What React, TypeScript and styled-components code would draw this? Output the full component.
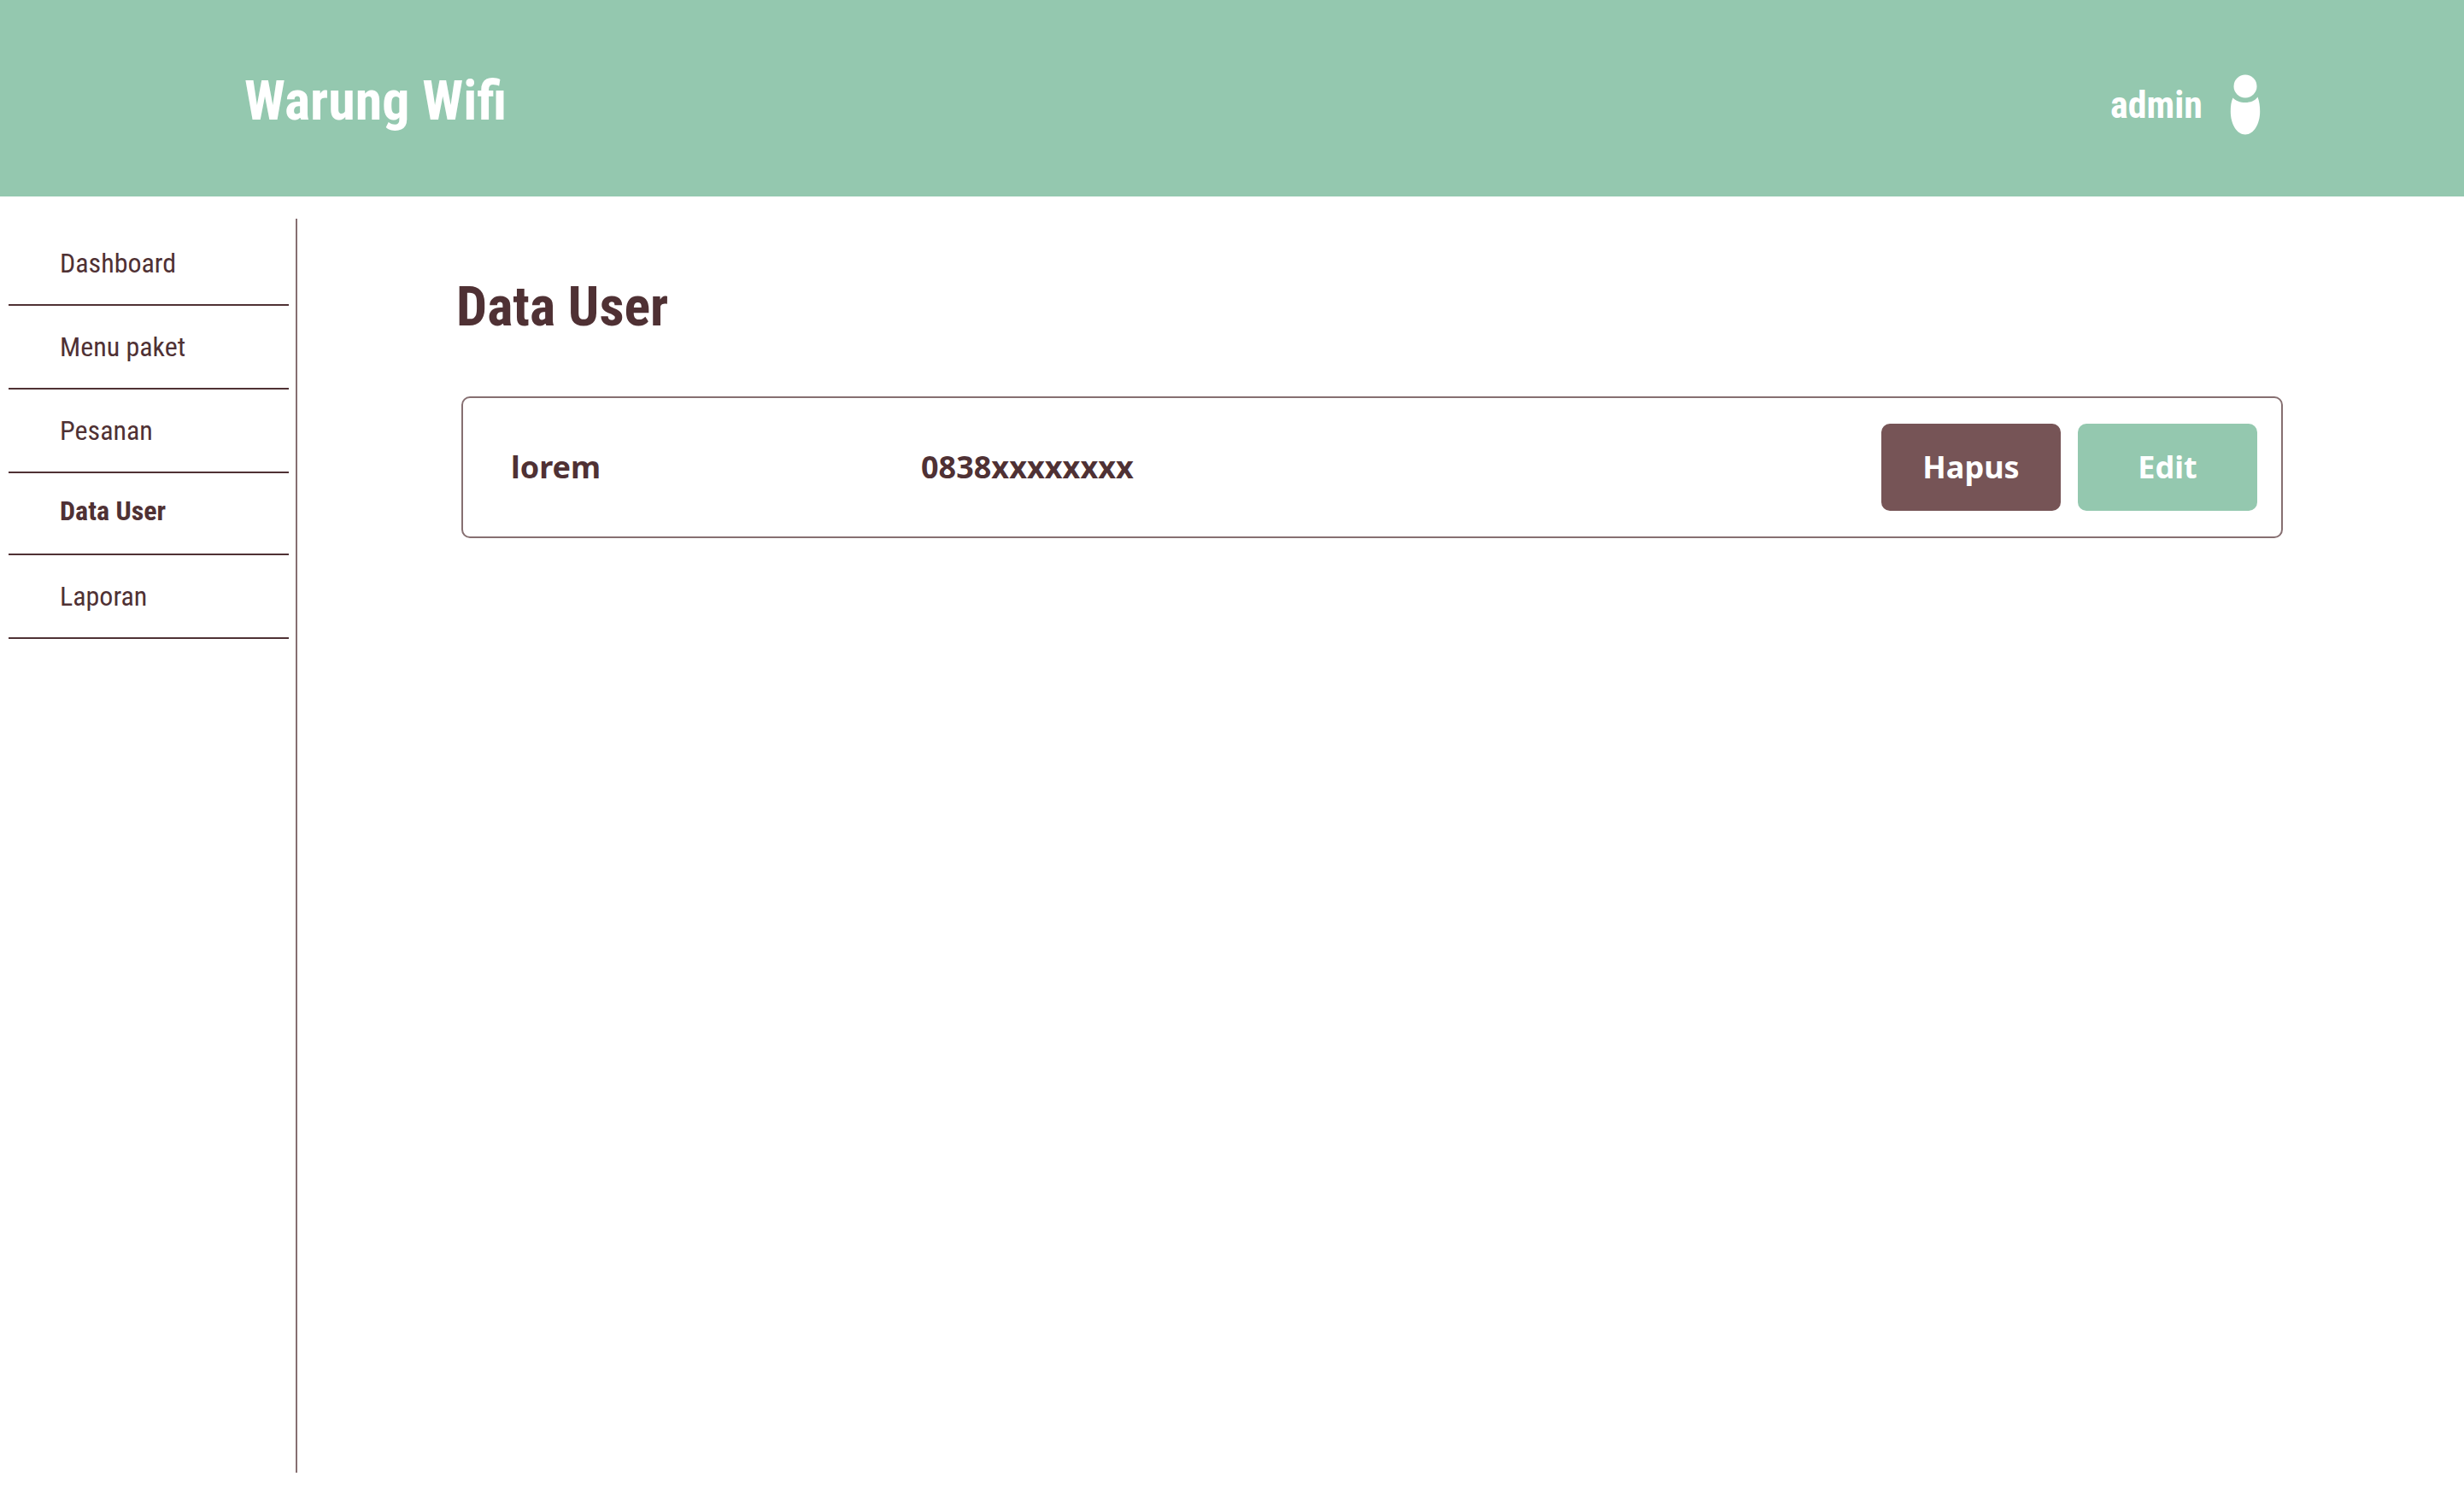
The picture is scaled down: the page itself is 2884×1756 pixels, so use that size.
import React from "react";
import styled, { createGlobalStyle } from "styled-components";

const color = {
  mint: "#94c8af",
  ink: "#4f3134",
  rose: "#765456",
  line: "#866f71",
  paper: "#ffffff",
};

const display = `"Roboto Condensed", "Liberation Sans Narrow", "Liberation Sans", sans-serif`;
const body = `"Noto Sans", "Open Sans", sans-serif`;

const GlobalStyle = createGlobalStyle`
  *, *::before, *::after { box-sizing: border-box; }
  body { margin: 0; background: ${color.paper}; color: ${color.ink}; font-family: ${body}; }
`;

const Page = styled.div`
  display: flex;
  flex-direction: column;
  min-height: 100vh;
`;

const Header = styled.header`
  display: flex;
  align-items: center;
  justify-content: space-between;
  height: 230px;
  padding: 8px 238px 0 286px;
  background: ${color.mint};
  color: #fff;
  font-family: ${display};
  font-weight: 700;
`;

const Brand = styled.a`
  color: inherit;
  font-size: 64px;
  line-height: 80px;
  text-decoration: none;
`;

const Account = styled.button`
  display: flex;
  align-items: center;
  gap: 32px;
  padding: 8px 0 0;
  border: 0;
  background: none;
  color: inherit;
  font: inherit;
  font-size: 44px;
  line-height: 80px;
  cursor: pointer;
`;

const Columns = styled.div`
  display: flex;
  flex: 1;
  padding: 26px 0 32px;
`;

const Sidebar = styled.aside`
  flex: none;
  width: 348px;
  padding: 4px 8px 0 10px;
  border-right: 2px solid ${color.line};
`;

const NavList = styled.ul`
  margin: 0;
  padding: 0;
  list-style: none;
`;

const NavLink = styled.a<{ $active?: boolean }>`
  display: block;
  padding: ${(p) => (p.$active ? "20px 60px 26px" : "24px 60px")};
  border-bottom: 2px solid ${color.ink};
  color: ${color.ink};
  font-family: ${display};
  font-size: 32px;
  font-weight: ${(p) => (p.$active ? 700 : 400)};
  line-height: 48px;
  text-decoration: none;
  white-space: nowrap;
`;

const Main = styled.main`
  flex: 1;
  min-width: 0;
  padding: 64px 212px 0 192px;
`;

const Title = styled.h1`
  margin: 0 0 64px -6px;
  font-family: ${display};
  font-size: 64px;
  font-weight: 700;
  line-height: 80px;
`;

const UserList = styled.ul`
  display: grid;
  gap: 32px;
  margin: 0;
  padding: 0;
  list-style: none;
`;

const UserRow = styled.li`
  display: grid;
  grid-template-columns: 480px 1fr auto;
  align-items: center;
  padding: 30px 28px 30px 56px;
  border: 2px solid ${color.line};
  border-radius: 10px;
  font-size: 36px;
  font-weight: 700;
  line-height: 50px;
`;

const Actions = styled.div`
  display: flex;
  gap: 20px;
`;

const ActionButton = styled.button<{ $tone: string }>`
  width: 210px;
  padding: 26px 0;
  border: 0;
  border-radius: 10px;
  background: ${(p) => p.$tone};
  color: #fff;
  font: inherit;
  cursor: pointer;
`;

const PersonIcon = () => (
  <svg width="36" height="72" viewBox="0 0 36 72" fill="#fff" aria-hidden="true">
    <circle cx="18" cy="14" r="13.5" />
    <path d="M3.5 27.5 C6.500 31 12 33 18 33 C24 33 29.500 31 32.500 26.500 C34.500 32 35.200 37 35.200 43.500 C35.200 58 28 70.500 18 70.500 C8 70.500 0.800 58 0.800 43.500 C0.800 37 1.500 32 3.500 27.500 Z" />
  </svg>
);

const menu = ["Dashboard", "Menu paket", "Pesanan", "Data User", "Laporan"];
const users = [{ name: "lorem", phone: "0838xxxxxxxx" }];

export default function App() {
  return (
    <Page>
      <GlobalStyle />
      <Header>
        <Brand href="#">Warung Wifi</Brand>
        <Account type="button">
          admin
          <PersonIcon />
        </Account>
      </Header>
      <Columns>
        <Sidebar>
          <nav>
            <NavList>
              {menu.map((item) => (
                <li key={item}>
                  <NavLink
                    href="#"
                    $active={item === "Data User"}
                    aria-current={item === "Data User" ? "page" : undefined}
                  >
                    {item}
                  </NavLink>
                </li>
              ))}
            </NavList>
          </nav>
        </Sidebar>
        <Main>
          <Title>Data User</Title>
          <UserList>
            {users.map((user) => (
              <UserRow key={user.phone}>
                <span>{user.name}</span>
                <span>{user.phone}</span>
                <Actions>
                  <ActionButton type="button" $tone={color.rose}>Hapus</ActionButton>
                  <ActionButton type="button" $tone={color.mint}>Edit</ActionButton>
                </Actions>
              </UserRow>
            ))}
          </UserList>
        </Main>
      </Columns>
    </Page>
  );
}
